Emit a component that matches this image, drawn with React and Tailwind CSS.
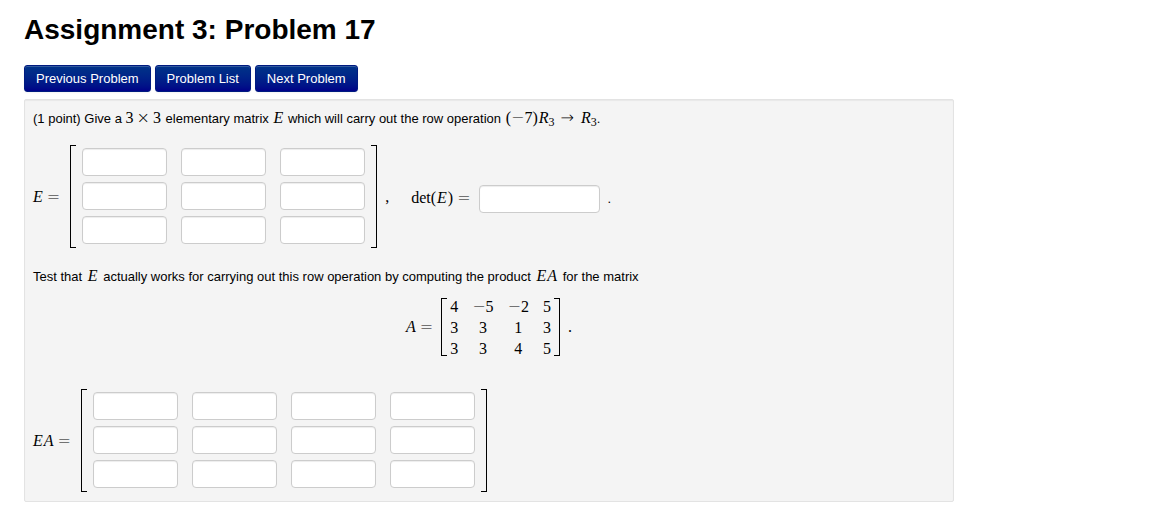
import React from "react";

const navLinks = ["Previous Problem", "Problem List", "Next Problem"];

const matrixA = [
  [4, -5, -2, 5],
  [3, 3, 1, 3],
  [3, 3, 4, 5],
];

const inputStyle =
  "h-7 rounded border border-[#ccc] bg-white px-1 text-[13px] shadow-[inset_0_1px_1px_rgba(0,0,0,0.075)] outline-none focus:border-sky-500";

// Inline math, variables go in <i>
const M = ({ children, className = "" }) => (
  <span className={`whitespace-nowrap font-['Liberation_Serif',serif] text-[16px] ${className}`}>
    {children}
  </span>
);

// Thin operator sign
const Op = ({ children, className = "" }) => (
  <span className={`font-['DejaVu_Sans',sans-serif] font-extralight leading-none ${className}`}>
    {children}
  </span>
);

const Sub = ({ children }) => <sub className="text-[12px] leading-none">{children}</sub>;

// Left and right square brackets around a matrix
const Bracketed = ({ children, className = "" }) => (
  <div className={`flex items-center ${className}`}>
    <span className="w-[6px] self-stretch border-y border-l border-black" />
    {children}
    <span className="w-[6px] self-stretch border-y border-r border-black" />
  </div>
);

const AnswerMatrix = ({ name, rows, cols }) => (
  <Bracketed className="h-[103px]">
    <div className="flex flex-col gap-[6px] px-[6px] pb-px">
      {Array.from({ length: rows }, (_, r) => (
        <div key={r} className="flex gap-[14px]">
          {Array.from({ length: cols }, (_, c) => (
            <input
              key={c}
              type="text"
              aria-label={`${name} row ${r + 1} column ${c + 1}`}
              className={`w-[85px] ${inputStyle}`}
            />
          ))}
        </div>
      ))}
    </div>
  </Bracketed>
);

const App = () => {
  return (
    <div className="bg-white pb-3 pl-6 pr-[198px] pt-[10px] font-['Liberation_Sans',Arial,sans-serif] text-[13px] leading-5 text-black">
      <h1 className="text-[28px] font-bold leading-10">Assignment 3: Problem 17</h1>

      <nav className="mt-[15px] flex gap-1">
        {navLinks.map((label) => (
          <a
            key={label}
            href="#"
            className="rounded-[3px] border border-[#001a80] bg-linear-to-b from-[#003388] to-[#000088] px-[11px] pb-[2px] pt-[3px] text-white shadow-[inset_0_1px_0_rgba(255,255,255,0.2),0_1px_2px_rgba(0,0,0,0.05)]"
          >
            {label}
          </a>
        ))}
      </nav>

      <main className="mt-[7px] rounded-[2px] border border-[#e3e3e3] bg-[#f4f4f4] px-2 pb-[9px] pt-2 shadow-[inset_0_1px_1px_rgba(0,0,0,0.05)]">
        <p>
          (1 point) Give a{" "}
          <M className="mr-px">
            3<Op className="mx-[3px]">×</Op>3
          </M>{" "}
          elementary matrix{" "}
          <M className="mx-px">
            <i>E</i>
          </M>{" "}
          which will carry out the row operation{" "}
          <M className="ml-px">
            (<Op>−</Op>7)<i className="ml-px">R</i>
            <Sub>3</Sub>
            <Op className="mx-[6px]">→</Op>
            <i className="ml-px">R</i>
            <Sub>3</Sub>
          </M>
          .
        </p>

        <div className="mt-4 flex items-center">
          <M className="mr-[10px]">
            <i>E</i>
            <Op className="ml-1">=</Op>
          </M>
          <AnswerMatrix name="E" rows={3} cols={3} />
          <M className="ml-2">,</M>
          <label htmlFor="det" className="ml-[22px] mt-1">
            <M>
              det(<i className="mx-px">E</i>)<Op className="ml-1">=</Op>
            </M>
          </label>
          <input id="det" type="text" className={`ml-2 mt-1 w-[121px] ${inputStyle}`} />
          <span className="ml-2 mt-1">.</span>
        </div>

        <p className="mt-[18px]">
          Test that{" "}
          <M className="mx-[2px]">
            <i>E</i>
          </M>{" "}
          actually works for carrying out this row operation by computing the product{" "}
          <M className="mx-[2px]">
            <i>E</i>
            <i className="ml-px">A</i>
          </M>{" "}
          for the matrix
        </p>

        <div className="mt-[11px] flex items-center justify-center">
          <M className="mr-2">
            <i>A</i>
            <Op className="ml-1">=</Op>
          </M>
          <Bracketed className="h-[58px]">
            <table className="-mx-1 font-['Liberation_Serif',serif] text-[16px] leading-[21px]">
              <tbody>
                {matrixA.map((row, r) => (
                  <tr key={r}>
                    {row.map((n, c) => (
                      <td key={c} className="px-[7px] py-0 text-center">
                        {n < 0 && <Op>−</Op>}
                        {Math.abs(n)}
                      </td>
                    ))}
                  </tr>
                ))}
              </tbody>
            </table>
          </Bracketed>
          <M className="ml-2">.</M>
        </div>

        <div className="mt-[33px] flex items-center">
          <M className="mr-[10px]">
            <i>E</i>
            <i className="ml-px">A</i>
            <Op className="ml-1">=</Op>
          </M>
          <AnswerMatrix name="EA" rows={3} cols={4} />
        </div>
      </main>
    </div>
  );
};

export default App;
